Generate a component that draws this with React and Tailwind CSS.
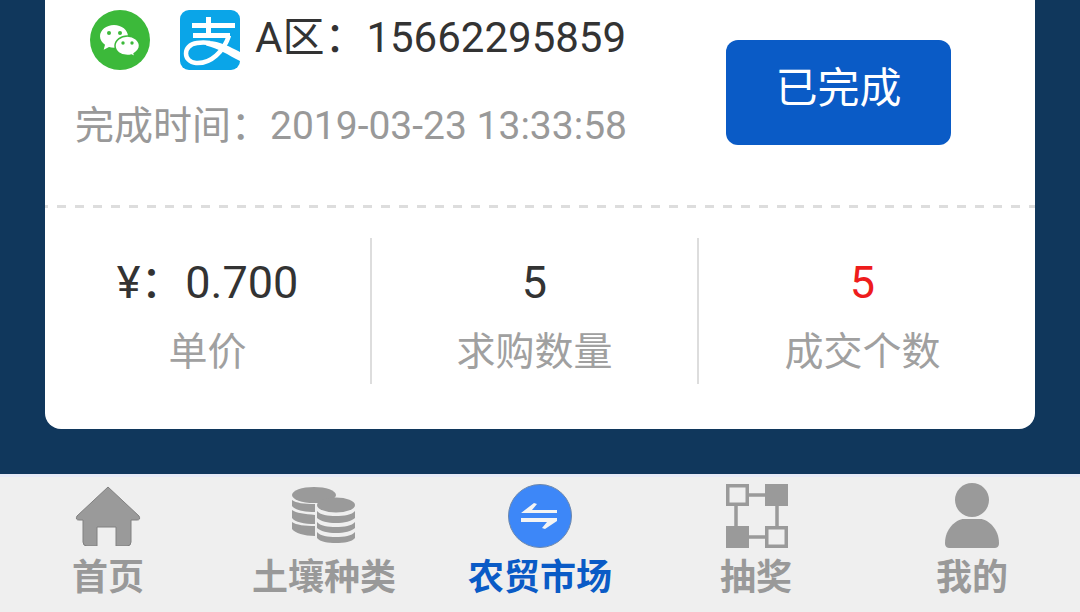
import React from 'react';

const fontStack = { fontFamily: 'Roboto, "Noto Sans CJK SC", sans-serif' };

const WechatIcon = () => (
  <svg width="60" height="60" viewBox="0 0 60 60" className="shrink-0">
    <circle cx="30" cy="30" r="30" fill="#3cb93a" />
    <path d="M24 15c-7.700 0-14 5-14 11.300 0 3.500 2 6.500 5 8.500l-1.300 5 5.300-2.800c1.600.5 3.200.7 5 .7 7.700 0 14-5.100 14-11.400S31.700 15 24 15z" fill="#fff" />
    <path d="M37.500 26c-7 0-12.500 4.400-12.500 9.800s5.500 9.800 12.500 9.800c1.400 0 2.700-.2 4-.6l3.600 2-1-3.400c3-1.800 5.400-4.600 5.400-7.800 0-5.400-5.500-9.800-12-9.800z" fill="#fff" stroke="#3cb93a" strokeWidth="1.500" />
    <circle cx="19" cy="23" r="2" fill="#3cb93a" />
    <circle cx="30" cy="23" r="2" fill="#3cb93a" />
    <circle cx="33" cy="33" r="1.700" fill="#3cb93a" />
    <circle cx="42" cy="33" r="1.700" fill="#3cb93a" />
  </svg>
);

const AlipayIcon = () => (
  <svg width="60" height="60" viewBox="0 0 60 60" className="shrink-0">
    <rect width="60" height="60" rx="9" fill="#0aa5e8" />
    <g fill="none" stroke="#fff" strokeWidth="5">
      <path d="M12 15.500h43" />
      <path d="M28.500 7v18" />
      <path d="M13 25.500h37" />
      <path d="M49 25.500C44 41 31 54 16 53 3 52 2 35 17 33 22 32.300 26 32.500 30 33" strokeWidth="4.500" />
    </g>
    <path d="M28 31C40 31 50 37 60 42V51C48 45 38 38 26 35.500Z" fill="#fff" />
  </svg>
);

const HomeIcon = () => (
  <svg width="66" height="60" viewBox="0 0 66 60">
    <path d="M33 1 L64 30 Q66 34 62 34 L56 34 L56 56 Q56 60 52 60 L41 60 L41 41 L22 41 L22 60 L12 60 Q8 60 8 56 L8 34 L4 34 Q0 34 2 30 Z" fill="#9a9a9a" stroke="#808080" strokeWidth="1" />
  </svg>
);

const CoinsIcon = () => (
  <svg width="66" height="60" viewBox="0 0 66 60" fill="#9a9a9a">
    <ellipse cx="23" cy="9" rx="22" ry="8" />
    <path d="M1 14c4 3 12 4 23 4v8C13 26 4 24 1 20zM1 24c4 3 13 4 23 5v9C13 38 4 36 1 32zM1 36c4 3 13 4 23 4v10C13 50 4 47 1 43z" />
    <ellipse cx="45" cy="19" rx="19" ry="7.500" />
    <path d="M26 25c3 4 11 5 19 5s16-1 19-5v7c-3 3-11 5-19 5s-16-2-19-5zM26 36c3 4 11 5 19 5s16-1 19-5v6c-3 3-11 5-19 5s-16-2-19-5zM26 46c3 4 11 5 19 5s16-1 19-5v6c-3 4-11 5-19 5s-16-1-19-5z" />
  </svg>
);

const SwapIcon = () => (
  <svg width="64" height="64" viewBox="0 0 64 64">
    <circle cx="32" cy="32" r="31.500" fill="#3d87f8" stroke="#6d88ad" strokeWidth="1" />
    <path d="M13 29 L26 19 L29 20 L24 26 H49 V29 Z" fill="#f4f4f4" />
    <path d="M13 34 H49 V37 L37 45 L34 44 L39 38 H13 Z" fill="#f4f4f4" />
  </svg>
);

const GraphIcon = () => (
  <svg width="62" height="64" viewBox="0 0 62 64" className="ml-[1px]">
    <g fill="none" stroke="#9a9a9a" strokeWidth="3.500">
      <path d="M23 11h16M10 22v20M51 22v20M23 53h16" />
      <rect x="1.750" y="1.750" width="19.500" height="18.500" />
      <rect x="40.750" y="43.750" width="19.500" height="18.500" />
    </g>
    <rect x="39" y="0" width="23" height="22" fill="#9a9a9a" />
    <rect x="0" y="42" width="23" height="22" fill="#9a9a9a" />
  </svg>
);

const PersonIcon = () => (
  <svg width="56" height="66" viewBox="0 0 56 66" fill="#9a9a9a">
    <ellipse cx="28" cy="17" rx="17" ry="17" />
    <path d="M1 60C1 46 12 36 20 36h16c8 0 19 10 19 24 0 4-2 5-5 5H6c-3 0-5-1-5-5z" />
  </svg>
);

const stats = [
  { value: '¥：0.700', label: '单价', color: 'text-[#333333]' },
  { value: '5', label: '求购数量', color: 'text-[#333333]' },
  { value: '5', label: '成交个数', color: 'text-[#ee1c1c]' },
];

const tabs = [
  { label: '首页', icon: <HomeIcon /> },
  { label: '土壤种类', icon: <CoinsIcon /> },
  { label: '农贸市场', icon: <SwapIcon />, active: true },
  { label: '抽奖', icon: <GraphIcon /> },
  { label: '我的', icon: <PersonIcon /> },
];

const App = () => {
  return (
    <div className="flex flex-col w-[1080px] h-[612px] overflow-hidden bg-[#10375c]" style={fontStack}>
      <div className="flex-1 px-[45px]">
        <div className="w-[990px] h-[429px] bg-white rounded-b-2xl">
          <div className="flex justify-between h-[205px]">
            <div>
              <div className="flex items-center gap-[30px] pl-[45px] pt-[10px] h-[70px]">
                <WechatIcon />
                <div className="flex items-center gap-[15px]">
                  <AlipayIcon />
                  <span className="text-[42px] leading-[60px] -mt-[4px] text-[#333333]">A区：15662295859</span>
                </div>
              </div>
              <p className="pl-[30px] mt-[30px] text-[39px] leading-[52px] text-[#999999] whitespace-nowrap">
                完成时间：2019-03-23 13:33:58
              </p>
            </div>
            <div className="pt-[40px] pr-[84px]">
              <button className="w-[225px] h-[105px] pb-[9px] rounded-xl bg-[#0a5bc6] text-white text-[42px]">
                已完成
              </button>
            </div>
          </div>

          <div className="h-[3px] bg-[repeating-linear-gradient(90deg,#dddddd_0,#dddddd_3px,transparent_3px,transparent_12px,#dddddd_12px,#dddddd_18px)]" />

          <div className="grid grid-cols-[327px_327px_327px] mt-[30px]">
            {stats.map((s, i) => (
              <div
                key={s.label}
                className={`h-[146px] flex flex-col items-center pt-[15px] ${i < 2 ? 'border-r-2 border-[#dddddd]' : ''}`}
              >
                <span className={`text-[45px] leading-[60px] whitespace-nowrap ${s.color}`}>{s.value}</span>
                <span className="mt-[11px] text-[39px] leading-[56px] text-[#a0a0a0]">{s.label}</span>
              </div>
            ))}
          </div>
        </div>
      </div>

      <div className="grid grid-cols-5 h-[138px] bg-[#efefef] border-t-[3px] border-[#e6e9f6]">
        {tabs.map((t) => (
          <div key={t.label} className="flex flex-col items-center">
            <div className="h-[66px] mt-[6px] flex items-center justify-center">{t.icon}</div>
            <span className={`mt-[4px] text-[36px] leading-[50px] font-bold ${t.active ? 'text-[#0a5bc6]' : 'text-[#999999]'}`}>
              {t.label}
            </span>
          </div>
        ))}
      </div>
    </div>
  );
};

export default App;
